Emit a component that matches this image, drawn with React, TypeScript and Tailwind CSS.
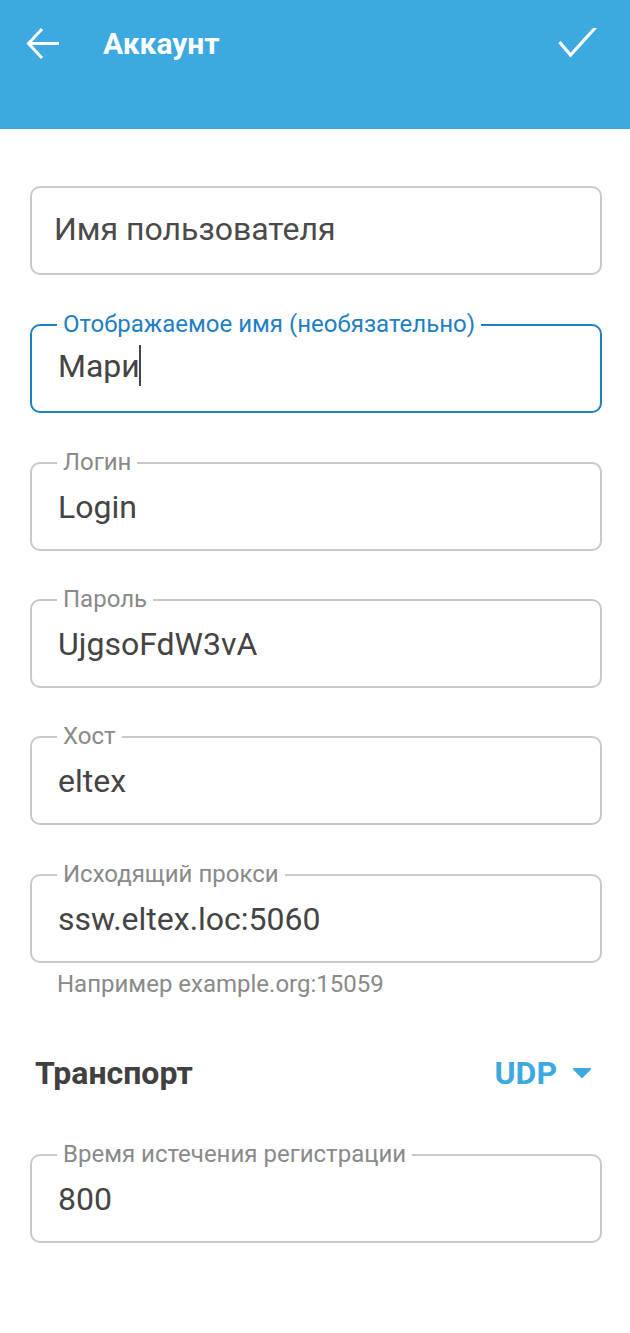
import React from "react";

function Field({
  label,
  value,
  placeholder,
  focused,
  cursor,
}: {
  label?: string;
  value?: string;
  placeholder?: string;
  focused?: boolean;
  cursor?: boolean;
}) {
  return (
    <div
      className={`relative h-[89px] rounded-[10px] border-2 ${
        focused ? "border-[#1f7fc4]" : "border-[#c9c9c9]"
      } flex items-center`}
    >
      {label && (
        <span
          className={`absolute -top-[16px] left-[25px] bg-white px-[6px] text-[24px] leading-[28px] ${
            focused ? "text-[#1f7fc4]" : "text-[#8a8a8a]"
          }`}
        >
          {label}
        </span>
      )}
      {placeholder ? (
        <span className="pl-[22px] pb-[3px] text-[32px] leading-[40px] text-[#4a4a4a]">{placeholder}</span>
      ) : (
        <span
          className={`pl-[26px] ${cursor ? "pb-[6px]" : ""} text-[32px] leading-[40px] text-[#444444] flex items-center`}
        >
          {value}
          {cursor && <span className="-ml-[1px] inline-block w-[2px] h-[41px] bg-[#444444]" />}
        </span>
      )}
    </div>
  );
}

export default function App() {
  return (
    <div
      className="w-[630px] h-[1333px] bg-white"
      style={{ fontFamily: "Roboto, 'Noto Sans', sans-serif" }}
    >
      <header className="h-[129px] bg-[#3caae0] flex items-start pt-[23px]">
        <div className="w-[103px] flex items-center pl-[26px] h-[42px]">
          <svg width="34" height="34" viewBox="0 0 34 34" fill="none" stroke="white" strokeWidth="3">
            <path d="M33 16.5H3" />
            <path d="M16 2L2.5 16.5L16 31" />
          </svg>
        </div>
        <h1 className="flex-1 text-white font-bold text-[30px] leading-[42px]">Аккаунт</h1>
        <div className="pr-[32px] h-[42px] flex items-center">
          <svg width="40" height="32" viewBox="0 0 40 32" fill="none" stroke="white" strokeWidth="3.2">
            <path d="M1.5 14L12.5 27L38 -1" />
          </svg>
        </div>
      </header>

      <main className="pl-[30px] pr-[28px] pt-[57px] flex flex-col">
        <Field placeholder="Имя пользователя" />
        <div className="h-[49px]" />
        <Field label="Отображаемое имя (необязательно)" value="Мари" focused cursor />
        <div className="h-[49px]" />
        <Field label="Логин" value="Login" />
        <div className="h-[48px]" />
        <Field label="Пароль" value="UjgsoFdW3vA" />
        <div className="h-[48px]" />
        <Field label="Хост" value="eltex" />
        <div className="h-[49px]" />
        <Field label="Исходящий прокси" value="ssw.eltex.loc:5060" />
        <p className="pl-[27px] pt-[7px] text-[24px] leading-[28px] text-[#8a8a8a]">
          Например example.org:15059
        </p>
        <div className="flex items-center justify-between pl-[5px] pr-[11px] mt-[52px] h-[46px]">
          <span className="font-bold text-[32px] text-[#404040]">Транспорт</span>
          <span className="flex items-center gap-[16px] text-[#3caae0] font-bold text-[32px]">
            UDP
            <svg width="18" height="10" viewBox="0 0 18 10">
              <path d="M1 1H17L9 9Z" fill="#3caae0" stroke="#3caae0" strokeLinejoin="round" strokeWidth="2" />
            </svg>
          </span>
        </div>
        <div className="h-[58px]" />
        <Field label="Время истечения регистрации" value="800" />
      </main>
    </div>
  );
}
